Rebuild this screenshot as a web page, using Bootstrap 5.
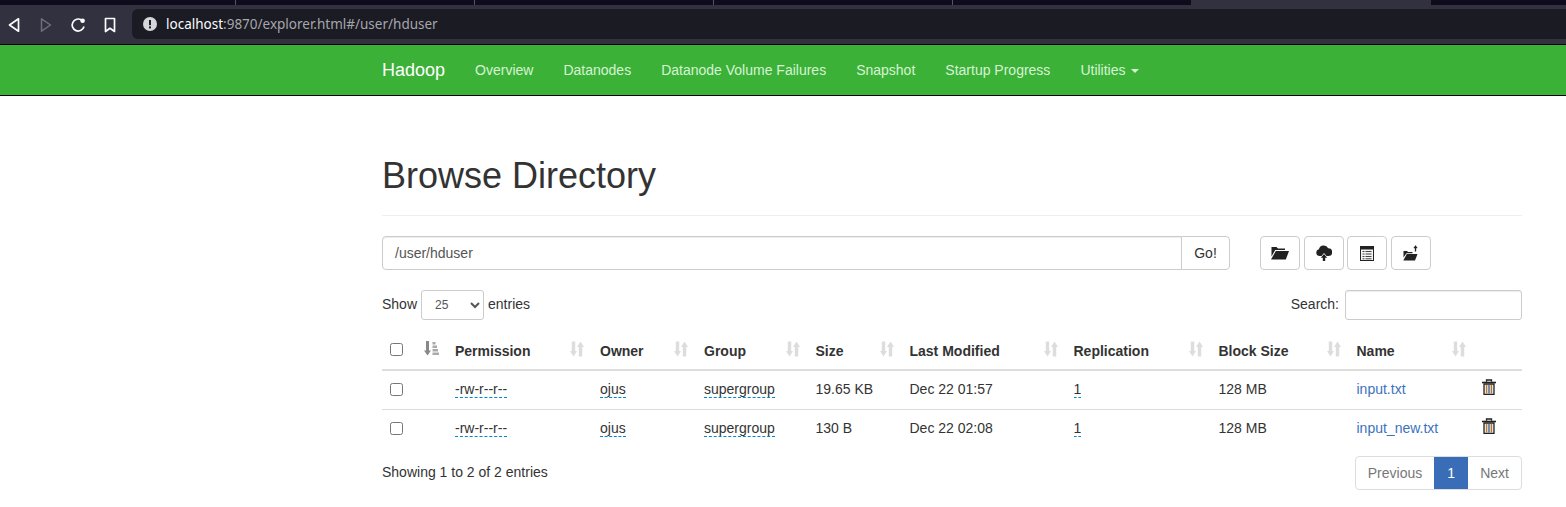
<!DOCTYPE html>
<html lang="en">
<head>
<meta charset="utf-8">
<title>Browsing HDFS</title>
<link href="https://cdn.jsdelivr.net/npm/bootstrap@5.3.0/dist/css/bootstrap.min.css" rel="stylesheet">
<style>
html,body{height:507px;overflow:hidden}
body{font-family:"Liberation Sans",Arial,sans-serif;font-size:14px;line-height:20px;color:#333;background:#fff}
.tabstrip{height:5px;background:#0f0b1c}
.tab-sep{width:1px;height:5px;background:#55545f;flex:none}
.sep-a{margin-left:235px}
.sep-b,.sep-c{margin-left:238px}
.tab-active{width:240px;height:5px;margin-left:238px;background:#32313f;flex:none}
.toolbar{height:40px;background:#32313f;border-bottom:1px solid #000;padding-top:4px}
.tool-group{margin-left:-2px}
.tool-btn{width:32px;height:32px;flex:none}
.urlbar{height:30px;margin-left:6px;flex:1;background:#1b1b23;border-radius:6px 0 0 6px;font-family:"Noto Sans","Liberation Sans",sans-serif;font-size:13.5px;color:#a6a6ad;padding-left:11px;gap:9px}
.urlbar b{font-weight:400;color:#fbfbfe}
.hnav{height:51px;background:#3bb138;border-bottom:1px solid #000}
.wrap{width:1170px;margin:0 0 0 367px;padding:0 15px}
.hnav .wrap{height:50px}
.hbrand{font-size:18px;color:#fff;text-decoration:none;margin-right:30px}
.hlink{color:#d7f3d4;text-decoration:none;margin-right:30px}
.caretdown{display:inline-block;width:0;height:0;margin-left:2px;vertical-align:middle;border-top:4px solid;border-right:4px solid transparent;border-left:4px solid transparent}
.phead{margin:60px 0 20px;padding-bottom:9px;border-bottom:1px solid #eee}
.phead h1{font-size:36px;line-height:40px;margin:20px 0 10px;font-weight:500;color:#333;font-family:"Liberation Sans",sans-serif}
.pathrow{height:34px}
.path-input{width:800px;height:34px;border:1px solid #ccc;border-radius:4px 0 0 4px;padding:6px 12px;color:#555;line-height:20px;box-shadow:inset 0 1px 1px rgba(0,0,0,.075)}
.go-btn{width:49px;height:34px;margin-left:-1px;border:1px solid #ccc;border-radius:0 4px 4px 0;background:#fff;color:#333;padding:0;font-size:14px}
.ico-group{margin-left:30px;gap:3.5px}
.ico-btn{width:40px;height:34px;border:1px solid #ccc;border-radius:4px;background:#fff;padding:0}
.ico-btn svg{display:block;margin:0 auto}
.toprow{margin-top:20px;height:30px}
.ctl-label{margin-bottom:2px}
.len-select{width:63px;height:30px;border:1px solid #ccc;border-radius:3px;font-size:12px;color:#555;background:#fff;padding:0 0 0 9px;margin:0 4px;font-family:"Liberation Sans",sans-serif}
.find{width:177px;height:30px;border:1px solid #ccc;border-radius:3px;margin-left:6px;box-shadow:inset 0 1px 1px rgba(0,0,0,.075)}
.hdfs-table{width:1140px;margin:10px 0 0;table-layout:fixed;border-collapse:collapse;color:#333}
.hdfs-table col:nth-child(1){width:33px}
.hdfs-table col:nth-child(2){width:32px}
.hdfs-table col:nth-child(3){width:145px}
.hdfs-table col:nth-child(4){width:104px}
.hdfs-table col:nth-child(5){width:111.500px}
.hdfs-table col:nth-child(6){width:94px}
.hdfs-table col:nth-child(7){width:164px}
.hdfs-table col:nth-child(8){width:145px}
.hdfs-table col:nth-child(9){width:138px}
.hdfs-table col:nth-child(10){width:125px}
.hdfs-table col:nth-child(11){width:48.500px}
.hdfs-table th{height:40px;border-bottom:2px solid #ddd;font-weight:700;padding:0 8px;position:relative;vertical-align:middle;background:#fff}
.hdfs-table th span{display:inline-block;padding-top:2px}
.hdfs-table td{height:39px;border-bottom:1px solid #ddd;padding:0 8px 1px;vertical-align:middle;background:#fff}
.hdfs-table tbody tr:last-child td{border-bottom:0;padding-bottom:2px}
.hdfs-table tbody tr:last-child .chk{margin-top:2px}
.sortmark{position:absolute;top:11px;right:8px}
.chk{display:block;width:13px;height:13px;margin:0}
.ed{border-bottom:1px dashed #08c;text-decoration:none;color:#333}
.flink{color:#3d72bd;text-decoration:none}
.bin{display:block;margin:0 0 4px 0}
.botrow{margin-top:6px}
.pager{height:34px;border:1px solid #ddd;border-radius:4px;color:#777;overflow:hidden;margin-top:2px}
.pager div{padding:0 12px;line-height:32px}
.pager .cur{background:#3a6db8;color:#fff;width:34px;padding:0;text-align:center}
</style>
</head>
<body>
<svg width="0" height="0" class="d-block" aria-hidden="true">
  <defs>
    <g id="sorticon"><path d="M3.500 .5v10M10.500 15.500V5.500" stroke="#ddd" stroke-width="3.400"/><path d="M0 10h7l-3.500 5.500zM7 6h7L10.500 .5z" fill="#ddd"/></g>
    <g id="binicon"><path d="M4.500 2.700V1h5v1.700" fill="none" stroke="#222" stroke-width="1.300"/><path d="M0 3.500h14" stroke="#222" stroke-width="1.600"/><path d="M2 5h10v10.300H2z" fill="#efe6da" stroke="#222" stroke-width="1.300"/><path d="M4.600 6v8.500" stroke="#b5813f" stroke-width="1.300"/><path d="M7 6v8.500" stroke="#3f5f90" stroke-width="1.300"/><path d="M9.400 6v8.500" stroke="#a8763a" stroke-width="1.300"/></g>
  </defs>
</svg>
<div class="tabstrip d-flex">
  <div class="tab-sep sep-a"></div><div class="tab-sep sep-b"></div><div class="tab-sep sep-c"></div><div class="tab-sep sep-c"></div><div class="tab-active"></div>
</div>
<div class="toolbar d-flex">
  <div class="tool-group d-flex">
    <div class="tool-btn d-flex align-items-center justify-content-center"><svg width="12" height="16" viewBox="0 0 12 16"><path d="M10.500 1.800 1.500 8l9 6.200z" fill="none" stroke="#fbfbfe" stroke-width="1.700" stroke-linejoin="round"/></svg></div>
    <div class="tool-btn d-flex align-items-center justify-content-center"><svg width="12" height="16" viewBox="0 0 12 16"><path d="M1.500 1.800 10.500 8l-9 6.200z" fill="none" stroke="#6f6e7a" stroke-width="1.500" stroke-linejoin="round"/></svg></div>
    <div class="tool-btn d-flex align-items-center justify-content-center"><svg width="16" height="16" viewBox="0 0 16 16"><path d="M14 9.500A6 6 0 1 1 11.500 3" fill="none" stroke="#fbfbfe" stroke-width="1.700"/><circle cx="12.600" cy="3.800" r="2.300" fill="#fbfbfe"/></svg></div>
    <div class="tool-btn d-flex align-items-center justify-content-center"><svg width="12" height="16" viewBox="0 0 12 16"><path d="M1.500 1.500h9v13L6 11.300 1.500 14.500z" fill="none" stroke="#fbfbfe" stroke-width="1.700" stroke-linejoin="round"/></svg></div>
  </div>
  <div class="urlbar d-flex align-items-center">
    <svg width="14" height="14" viewBox="0 0 14 14"><circle cx="7" cy="7" r="7" fill="#d6d6da"/><rect x="6" y="3" width="2" height="5.200" fill="#1b1b23"/><rect x="6" y="9.400" width="2" height="2" fill="#1b1b23"/></svg>
    <span><b>localhost</b>:9870/explorer.html#/user/hduser</span>
  </div>
</div>
<nav class="hnav">
  <div class="wrap d-flex align-items-center">
    <a class="hbrand" href="#">Hadoop</a>
    <a class="hlink" href="#">Overview</a>
    <a class="hlink" href="#">Datanodes</a>
    <a class="hlink" href="#">Datanode Volume Failures</a>
    <a class="hlink" href="#">Snapshot</a>
    <a class="hlink" href="#">Startup Progress</a>
    <a class="hlink" href="#">Utilities <span class="caretdown"></span></a>
  </div>
</nav>
<main class="wrap">
  <div class="phead"><h1>Browse Directory</h1></div>
  <div class="pathrow d-flex">
    <div class="path-input">/user/hduser</div>
    <button class="go-btn" type="button">Go!</button>
    <div class="ico-group d-flex">
      <button class="ico-btn" type="button" aria-label="Open"><svg width="18" height="14" viewBox="0 0 18 14"><path d="M.5 1h5l1.500 1.500H14V4H4.200L.5 10.500z" fill="#222"/><path d="M4.800 5H18l-3.200 8.500H0z" fill="#222"/></svg></button>
      <button class="ico-btn" type="button" aria-label="Upload"><svg width="16" height="16" viewBox="0 0 16 16"><path d="M3.500 11a3.400 3.400 0 0 1-.6-6.700A5 5 0 0 1 12.200 3.300a3.800 3.800 0 0 1 .4 7.700H10.500L8 8 5.500 11z" fill="#222"/><path d="M8 9 11.200 12.800H9.200V16H6.800v-3.200H4.800z" fill="#222"/></svg></button>
      <button class="ico-btn" type="button" aria-label="Table"><svg width="14" height="15" viewBox="0 0 14 15"><rect x=".5" y=".5" width="13" height="14" fill="#f4f4f4" stroke="#222"/><rect x="1" y="1" width="12" height="2.500" fill="#222"/><path d="M2.500 5.500h2M2.500 8h2M2.500 10.500h2M2.500 12.800h2M5.500 5.500h6M5.500 8h6M5.500 10.500h6M5.500 12.800h6" stroke="#444"/></svg></button>
      <button class="ico-btn" type="button" aria-label="New folder"><svg width="16" height="16" viewBox="0 0 16 16"><path d="M.5 6h3.500l1 1h4.500v1.200H3.500L.5 12.500z" fill="#222"/><path d="M3.800 9H14.500l-2.500 6.500H.3z" fill="#222"/><path d="M12.500 .5v6M10.800 2.500h3.400" stroke="#222" stroke-width="1.300"/></svg></button>
    </div>
  </div>
  <div class="toprow d-flex justify-content-between align-items-center">
    <div class="d-flex align-items-center"><span class="ctl-label">Show</span> <select class="len-select" aria-label="entries"><option>25</option></select> <span class="ctl-label">entries</span></div>
    <div class="d-flex align-items-center"><span class="ctl-label">Search:</span> <input class="find" type="search" aria-label="Search"></div>
  </div>
  <table class="hdfs-table">
    <colgroup><col><col><col><col><col><col><col><col><col><col><col></colgroup>
    <thead><tr>
      <th><input class="chk" type="checkbox" aria-label="all"></th>
      <th><svg class="sortmark" width="16" height="15" viewBox="0 0 16 15"><path d="M4.500 0v10" stroke="#888" stroke-width="3"/><path d="M1 9.500h7l-3.500 5z" fill="#888"/><path d="M9.500 1h3v2.500h-3zM9.500 4.500h4.500V7H9.500zM9.500 8h5.500v2.500H9.500zM9.500 11.500h6.500V14H9.500z" fill="#aaa"/></svg></th>
      <th><span>Permission</span><svg class="sortmark" width="14" height="16" viewBox="0 0 14 16"><use href="#sorticon"/></svg></th>
      <th><span>Owner</span><svg class="sortmark" width="14" height="16" viewBox="0 0 14 16"><use href="#sorticon"/></svg></th>
      <th><span>Group</span><svg class="sortmark" width="14" height="16" viewBox="0 0 14 16"><use href="#sorticon"/></svg></th>
      <th><span>Size</span><svg class="sortmark" width="14" height="16" viewBox="0 0 14 16"><use href="#sorticon"/></svg></th>
      <th><span>Last Modified</span><svg class="sortmark" width="14" height="16" viewBox="0 0 14 16"><use href="#sorticon"/></svg></th>
      <th><span>Replication</span><svg class="sortmark" width="14" height="16" viewBox="0 0 14 16"><use href="#sorticon"/></svg></th>
      <th><span>Block Size</span><svg class="sortmark" width="14" height="16" viewBox="0 0 14 16"><use href="#sorticon"/></svg></th>
      <th><span>Name</span><svg class="sortmark" width="14" height="16" viewBox="0 0 14 16"><use href="#sorticon"/></svg></th>
      <th></th>
    </tr></thead>
    <tbody>
      <tr><td><input class="chk" type="checkbox" aria-label="input.txt"></td><td></td><td><span class="ed">-rw-r--r--</span></td><td><span class="ed">ojus</span></td><td><span class="ed">supergroup</span></td><td>19.65 KB</td><td>Dec 22 01:57</td><td><span class="ed">1</span></td><td>128 MB</td><td><a class="flink" href="#">input.txt</a></td><td><svg class="bin" width="14" height="16" viewBox="0 0 14 16"><use href="#binicon"/></svg></td></tr>
      <tr><td><input class="chk" type="checkbox" aria-label="input_new.txt"></td><td></td><td><span class="ed">-rw-r--r--</span></td><td><span class="ed">ojus</span></td><td><span class="ed">supergroup</span></td><td>130 B</td><td>Dec 22 02:08</td><td><span class="ed">1</span></td><td>128 MB</td><td><a class="flink" href="#">input_new.txt</a></td><td><svg class="bin" width="14" height="16" viewBox="0 0 14 16"><use href="#binicon"/></svg></td></tr>
    </tbody>
  </table>
  <div class="botrow d-flex justify-content-between">
    <div class="pt-2">Showing 1 to 2 of 2 entries</div>
    <div class="pager d-flex"><div>Previous</div><div class="cur">1</div><div>Next</div></div>
  </div>
</main>
</body>
</html>
